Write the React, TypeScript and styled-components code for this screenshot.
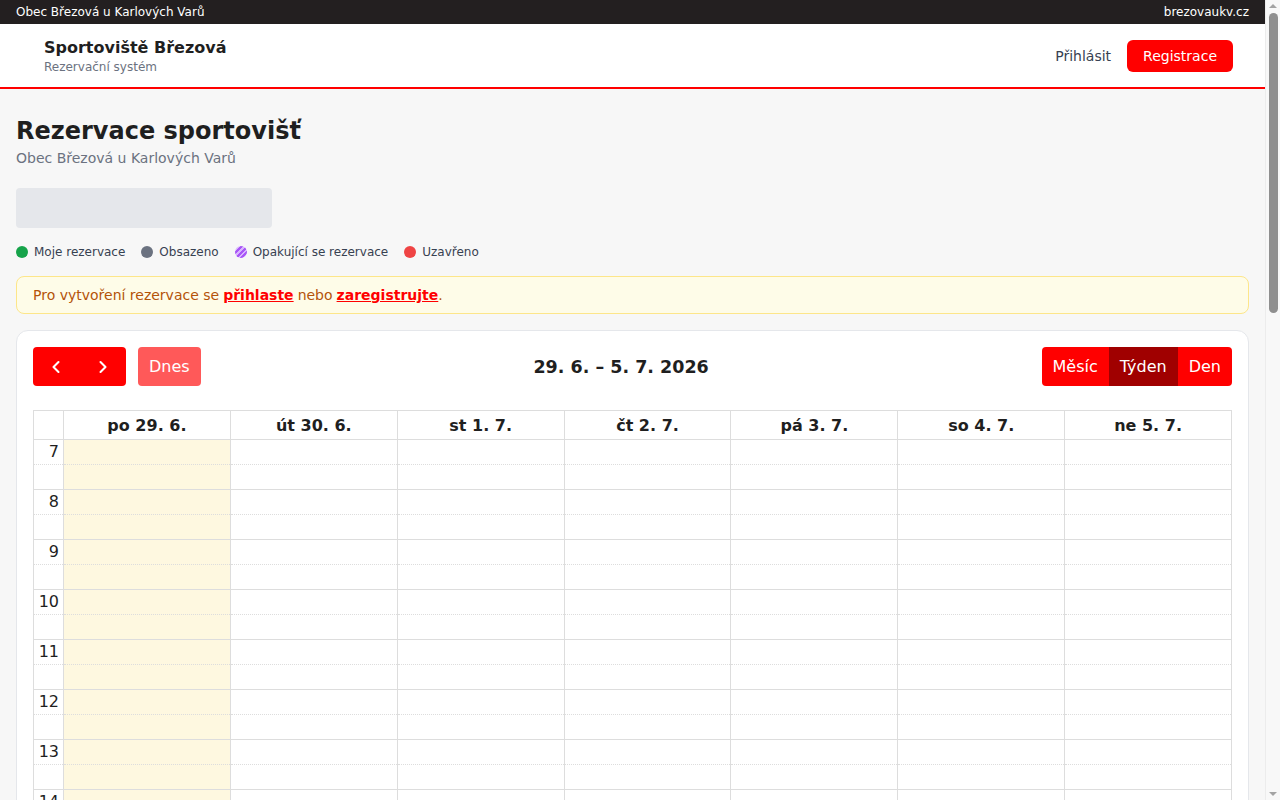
import React from "react";
import styled, { createGlobalStyle } from "styled-components";
import { ChevronLeft, ChevronRight } from "lucide-react";

const Global = createGlobalStyle`
  html, body { margin: 0; padding: 0; }
  body {
    font-family: "DejaVu Sans", "Liberation Sans", sans-serif;
    background: #f7f7f7;
    color: #1f1f1f;
  }
  #root { width: 1265px; }
  * { box-sizing: border-box; }
`;

const ScrollTrack = styled.div`
  position: fixed;
  top: 0;
  right: 0;
  width: 15px;
  height: 100vh;
  background: #f8f8f8;
  border-left: 1px solid #ececec;
  z-index: 10;
`;

const ScrollThumb = styled.div`
  position: absolute;
  top: 13px;
  left: 3px;
  width: 9px;
  height: 300px;
  background: #8f8f8f;
  border-radius: 5px;
`;

const ScrollArrow = styled.div<{ $down?: boolean }>`
  position: absolute;
  left: 3px;
  ${(p) => (p.$down ? "bottom: 4px;" : "top: 4px;")}
  width: 0;
  height: 0;
  border-left: 4px solid transparent;
  border-right: 4px solid transparent;
  ${(p) => (p.$down ? "border-top: 4px solid #a3a3a3;" : "border-bottom: 4px solid #a3a3a3;")}
`;

const TopBar = styled.div`
  height: 24px;
  background: #231f20;
  color: #fff;
  font-size: 12px;
  display: flex;
  align-items: center;
  justify-content: space-between;
  padding: 0 16px;
`;

const Header = styled.header`
  height: 65px;
  background: #fff;
  border-bottom: 2px solid #ff0000;
  display: flex;
  align-items: center;
  justify-content: space-between;
  padding: 0 32px 0 44px;
`;

const Brand = styled.div`
  display: flex;
  flex-direction: column;
  gap: 3px;
`;

const BrandName = styled.div`
  font-size: 16px;
  font-weight: 700;
  color: #1f1f1f;
`;

const BrandSub = styled.div`
  font-size: 12px;
  color: #6b7280;
`;

const Nav = styled.div`
  display: flex;
  align-items: center;
  gap: 16px;
`;

const LoginLink = styled.a`
  font-size: 14px;
  color: #374151;
  text-decoration: none;
`;

const RegisterButton = styled.a`
  background: #ff0000;
  color: #fff;
  font-size: 14px;
  height: 32px;
  padding: 0 16px;
  border-radius: 6px;
  display: inline-flex;
  align-items: center;
  text-decoration: none;
`;

const Main = styled.main`
  padding: 24px 16px 200px;
`;

const Title = styled.h1`
  margin: 2px 0 0;
  font-size: 24px;
  font-weight: 700;
  line-height: 32px;
  color: #1f1f1f;
`;

const Subtitle = styled.div`
  margin-top: 3px;
  font-size: 14px;
  color: #6b7280;
`;

const Placeholder = styled.div`
  margin-top: 22px;
  width: 256px;
  height: 40px;
  background: #e5e7eb;
  border-radius: 4px;
`;

const Legend = styled.div`
  margin-top: 17px;
  display: flex;
  gap: 16px;
  font-size: 12px;
  color: #374151;
`;

const LegendItem = styled.div`
  display: flex;
  align-items: center;
  gap: 6px;
`;

const Dot = styled.span<{ $c: string; $striped?: boolean }>`
  width: 12px;
  height: 12px;
  border-radius: 50%;
  background: ${(p) =>
    p.$striped
      ? `repeating-linear-gradient(135deg, ${p.$c} 0 2px, #d8b4fe 2px 4px)`
      : p.$c};
`;

const Alert = styled.div`
  margin-top: 17px;
  background: #fefce8;
  border: 1px solid #fde68a;
  border-radius: 8px;
  padding: 0 16px;
  height: 38px;
  display: flex;
  align-items: center;
  font-size: 14px;
  color: #b45309;
`;

const AlertLink = styled.a`
  color: #ff0000;
  font-weight: 700;
  text-decoration: underline;
  margin: 0 4px;
`;

const Card = styled.section`
  margin-top: 16px;
  background: #fff;
  border: 1px solid #e5e7eb;
  border-radius: 12px;
  padding: 16px;
`;

const Toolbar = styled.div`
  display: flex;
  align-items: center;
  justify-content: space-between;
  margin-bottom: 24px;
`;

const ToolGroup = styled.div`
  display: flex;
  align-items: center;
  gap: 12px;
`;

const ButtonGroup = styled.div`
  display: flex;
  border-radius: 4px;
  overflow: hidden;
`;

const Btn = styled.button<{ $active?: boolean; $faded?: boolean }>`
  height: 39px;
  border: 0;
  margin: 0;
  font-family: inherit;
  font-size: 16px;
  color: #fff;
  padding: 0 11px;
  background: ${(p) => (p.$active ? "#a00000" : p.$faded ? "#ff5959" : "#ff0000")};
  display: inline-flex;
  align-items: center;
  justify-content: center;
`;

const SoloBtn = styled(Btn)`
  border-radius: 4px;
`;

const IconBtn = styled(Btn)`
  width: 46.5px;
  padding: 0;
`;

const RangeTitle = styled.h2`
  margin: 0;
  font-size: 17.5px;
  font-weight: 700;
  color: #1f1f1f;
`;

const Grid = styled.div`
  display: grid;
  grid-template-columns: 30px repeat(7, 1fr);
  border-top: 1px solid #ddd;
  border-left: 1px solid #ddd;
`;

const HeadCell = styled.div`
  height: 29px;
  border-right: 1px solid #ddd;
  border-bottom: 1px solid #ddd;
  font-size: 16px;
  font-weight: 700;
  color: #1f1f1f;
  display: flex;
  align-items: center;
  justify-content: center;
`;

const SlotCell = styled.div<{ $today?: boolean }>`
  height: 50px;
  border-right: 1px solid #ddd;
  border-bottom: 1px solid #ddd;
  background: ${(p) => (p.$today ? "#fef8e0" : "#fff")};
  display: flex;
  flex-direction: column;
`;

const HalfSlot = styled.div`
  height: 25px;
  border-bottom: 1px dotted #ddd;
`;

const AxisLabel = styled.div`
  height: 25px;
  border-bottom: 1px dotted #ddd;
  font-size: 16px;
  color: #1f1f1f;
  text-align: right;
  padding: 2px 4px 0 0;
  background: #fff;
`;

const days = ["po 29. 6.", "út 30. 6.", "st 1. 7.", "čt 2. 7.", "pá 3. 7.", "so 4. 7.", "ne 5. 7."];
const hours = Array.from({ length: 16 }, (_, i) => 7 + i);

export default function App() {
  return (
    <>
      <Global />
      <ScrollTrack>
        <ScrollArrow />
        <ScrollThumb />
        <ScrollArrow $down />
      </ScrollTrack>
      <TopBar>
        <span>Obec Březová u Karlových Varů</span>
        <span>brezovaukv.cz</span>
      </TopBar>
      <Header>
        <Brand>
          <BrandName>Sportoviště Březová</BrandName>
          <BrandSub>Rezervační systém</BrandSub>
        </Brand>
        <Nav>
          <LoginLink href="#">Přihlásit</LoginLink>
          <RegisterButton href="#">Registrace</RegisterButton>
        </Nav>
      </Header>
      <Main>
        <Title>Rezervace sportovišť</Title>
        <Subtitle>Obec Březová u Karlových Varů</Subtitle>
        <Placeholder />
        <Legend>
          <LegendItem><Dot $c="#16a34a" />Moje rezervace</LegendItem>
          <LegendItem><Dot $c="#6b7280" />Obsazeno</LegendItem>
          <LegendItem><Dot $c="#a855f7" $striped />Opakující se rezervace</LegendItem>
          <LegendItem><Dot $c="#ef4444" />Uzavřeno</LegendItem>
        </Legend>
        <Alert>
          Pro vytvoření rezervace se<AlertLink href="#">přihlaste</AlertLink>nebo<AlertLink href="#">zaregistrujte</AlertLink>
          <span style={{ marginLeft: -4 }}>.</span>
        </Alert>
        <Card>
          <Toolbar>
            <ToolGroup>
              <ButtonGroup>
                <IconBtn aria-label="prev"><ChevronLeft size={20} strokeWidth={2.5} /></IconBtn>
                <IconBtn aria-label="next"><ChevronRight size={20} strokeWidth={2.5} /></IconBtn>
              </ButtonGroup>
              <SoloBtn $faded>Dnes</SoloBtn>
            </ToolGroup>
            <RangeTitle>29. 6. – 5. 7. 2026</RangeTitle>
            <ButtonGroup>
              <Btn>Měsíc</Btn>
              <Btn $active>Týden</Btn>
              <Btn>Den</Btn>
            </ButtonGroup>
          </Toolbar>
          <Grid>
            <HeadCell />
            {days.map((d) => (
              <HeadCell key={d}>{d}</HeadCell>
            ))}
            {hours.map((h) => (
              <React.Fragment key={h}>
                <SlotCell>
                  <AxisLabel>{h}</AxisLabel>
                </SlotCell>
                {days.map((d, i) => (
                  <SlotCell key={d} $today={i === 0}>
                    <HalfSlot />
                  </SlotCell>
                ))}
              </React.Fragment>
            ))}
          </Grid>
        </Card>
      </Main>
    </>
  );
}
